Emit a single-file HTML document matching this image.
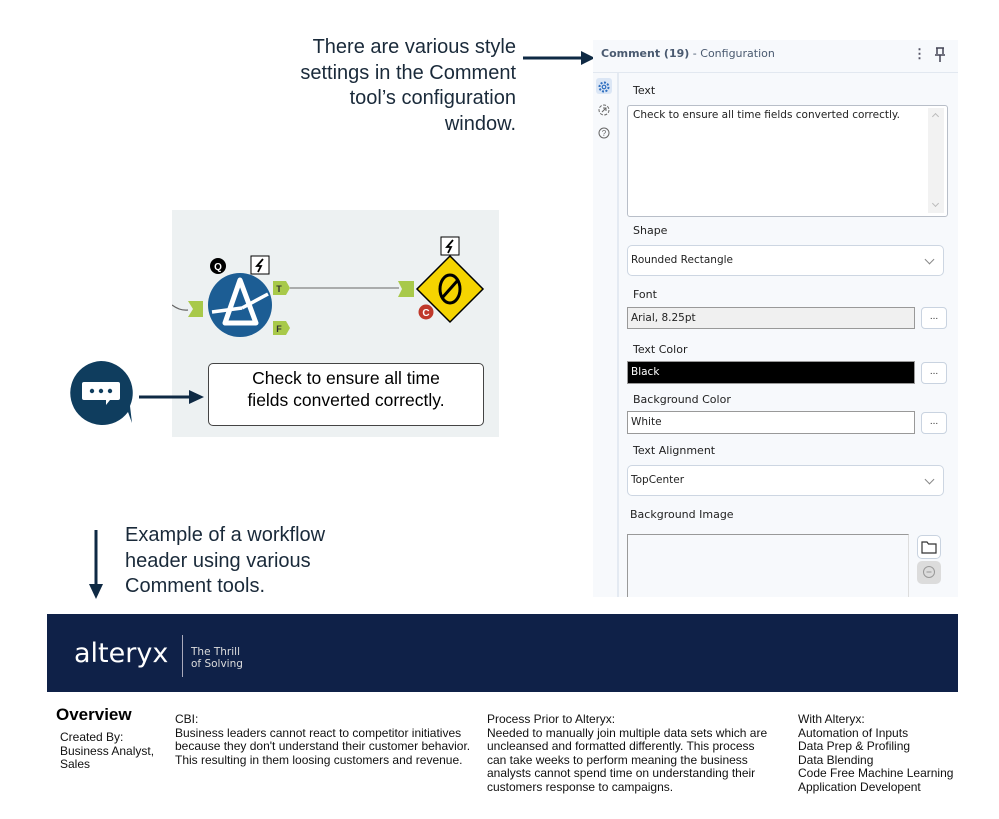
<!DOCTYPE html>
<html><head><meta charset="utf-8"><style>
*{margin:0;padding:0;box-sizing:border-box}
body{width:999px;height:819px;background:#fff;position:relative;overflow:hidden;font-family:"Liberation Sans",sans-serif}
.a{position:absolute}
.cal{font-family:"DejaVu Sans","Liberation Sans",sans-serif}
.big{font-family:"Liberation Sans",sans-serif;font-size:20px;color:#1a2a3a;line-height:25.5px}
.lbl{position:absolute;left:633px;font-size:11px;color:#222;font-family:"DejaVu Sans",sans-serif}
.fld{position:absolute;font-size:10.5px;color:#222;font-family:"DejaVu Sans",sans-serif;padding-left:3px}
.btn{position:absolute;left:921px;width:26px;height:22px;border:1px solid #c9d3e0;border-radius:4px;background:#fff;font-size:10px;text-align:center;line-height:18px;color:#333}
.dd{position:absolute;left:627px;width:317px;height:31px;border:1px solid #cdd6e2;border-radius:5px;background:#fff;font-size:10.5px;padding:8px 3px;color:#222;font-family:"DejaVu Sans",sans-serif}
.dd:after{content:"";position:absolute;right:10px;top:10px;width:6px;height:6px;border-right:1px solid #888;border-bottom:1px solid #888;transform:rotate(45deg)}
.ft{font-size:12px;line-height:13.5px;color:#111}
</style></head><body>

<div class="a big" style="left:296px;top:35px;width:220px;text-align:right">There are various style settings in the Comment tool’s configuration window.</div>
<svg class="a" style="left:523px;top:48px" width="72" height="20"><line x1="0" y1="10" x2="60" y2="10" stroke="#0f2a44" stroke-width="3"/><polygon points="58,3 72,10 58,17" fill="#0f2a44"/></svg>

<!-- config panel -->
<div class="a" style="left:593px;top:40px;width:365px;height:557px;background:#f7f9fc"></div>
<div class="a" style="left:593px;top:72px;width:365px;height:1px;background:#e2e8f0"></div>
<div class="a" style="left:617px;top:73px;width:2px;height:524px;background:#e4eaf2"></div>
<div class="a cal" style="left:601px;top:47px;font-size:11px;color:#4a5a70"><b style="font-weight:bold;color:#4a5a70">Comment (19)</b> - Configuration</div>
<div class="a" style="left:913px;top:46px;font-size:13px;color:#556;font-weight:bold">⋮</div>
<svg class="a" style="left:934px;top:47px" width="12" height="16"><path d="M2 1h8M3 1v6M9 1v6M1 8h10M6 8v7" stroke="#445" stroke-width="1.5" fill="none"/></svg>
<div class="a" style="left:596px;top:78px;width:16px;height:16px;border-radius:3px;background:#dbe6f5"></div>
<svg class="a" style="left:597px;top:80px" width="14" height="14"><circle cx="7" cy="7" r="4.5" fill="none" stroke="#2f6fc0" stroke-width="2" stroke-dasharray="2 1.5"/><circle cx="7" cy="7" r="1.8" fill="none" stroke="#2f6fc0" stroke-width="1.2"/></svg>
<svg class="a" style="left:597px;top:103px" width="14" height="14"><circle cx="7" cy="7" r="5" fill="none" stroke="#666" stroke-width="1" stroke-dasharray="3 1.5"/><path d="M5 9l4-4M6 5h3v3" stroke="#666" fill="none"/></svg>
<svg class="a" style="left:597px;top:126px" width="14" height="14"><circle cx="7" cy="7" r="5" fill="none" stroke="#666" stroke-width="1"/><text x="7" y="10" font-size="8" text-anchor="middle" fill="#666" font-family="Liberation Sans">?</text></svg>

<div class="lbl" style="top:84px">Text</div>
<div class="a" style="left:627px;top:105px;width:321px;height:112px;border:1px solid #b8bec8;border-radius:3px;background:#fff"></div>
<div class="a" style="left:928px;top:108px;width:16px;height:105px;background:#f2f2f2"></div>
<div class="a" style="left:933px;top:114px;width:5px;height:5px;border-left:1px solid #bbb;border-top:1px solid #bbb;transform:rotate(45deg)"></div>
<div class="a" style="left:933px;top:201px;width:5px;height:5px;border-right:1px solid #bbb;border-bottom:1px solid #bbb;transform:rotate(45deg)"></div>
<div class="fld" style="left:630px;top:109px">Check to ensure all time fields converted correctly.</div>
<div class="lbl" style="top:224px">Shape</div>
<div class="dd" style="top:245px">Rounded Rectangle</div>
<div class="lbl" style="top:288px">Font</div>
<div class="fld" style="left:627px;top:307px;width:288px;height:22px;border:1px solid #999;background:#f0f0f0;line-height:20px">Arial, 8.25pt</div>
<div class="btn" style="top:307px">...</div>
<div class="lbl" style="top:343px">Text Color</div>
<div class="fld" style="left:627px;top:361px;width:288px;height:23px;border:1px solid #999;background:#000;color:#fff;line-height:21px">Black</div>
<div class="btn" style="top:362px">...</div>
<div class="lbl" style="top:393px">Background Color</div>
<div class="fld" style="left:627px;top:411px;width:288px;height:23px;border:1px solid #999;background:#fff;line-height:21px">White</div>
<div class="btn" style="top:412px">...</div>
<div class="lbl" style="top:444px">Text Alignment</div>
<div class="dd" style="top:465px">TopCenter</div>
<div class="lbl" style="left:630px;top:508px">Background Image</div>
<div class="a" style="left:627px;top:534px;width:282px;height:63px;border:1px solid #999;border-right-color:#ddd;border-bottom:none;background:#f7f9fc"></div>
<div class="a" style="left:917px;top:535px;width:24px;height:24px;border:1px solid #c9d3e0;border-radius:5px;background:#fff"></div>
<svg class="a" style="left:921px;top:540px" width="16" height="14"><path d="M1 2h5l1.5 2H15v9H1z" fill="none" stroke="#333" stroke-width="1.2"/></svg>
<div class="a" style="left:917px;top:561px;width:24px;height:23px;border-radius:5px;background:#dcdcdc"></div>
<svg class="a" style="left:922px;top:565px" width="14" height="14"><circle cx="7" cy="7" r="5.5" fill="none" stroke="#999"/><line x1="4.5" y1="7" x2="9.5" y2="7" stroke="#999"/></svg>

<!-- canvas -->
<div class="a" style="left:172px;top:210px;width:327px;height:227px;background:#edf1f2"></div>
<svg class="a" style="left:172px;top:210px" width="327" height="227">
<path d="M0 95 Q8 101 16 100" stroke="#666" fill="none" stroke-width="1.2"/>
<polygon points="16,91 31,91 31,107 16,107 21,99" fill="#a8c94a"/>
<circle cx="68" cy="95" r="32" fill="#1c5d94"/>
<path d="M68 70 L53 113 H84 Z" fill="none" stroke="#fff" stroke-width="5" stroke-linejoin="round"/>
<path d="M40 102 L70 98 M70 98 L96 84" stroke="#fff" stroke-width="3.5"/>
<circle cx="46" cy="56" r="8" fill="#000"/><text x="46" y="60" font-size="10" font-weight="bold" fill="#fff" text-anchor="middle" font-family="Liberation Sans">Q</text>
<rect x="79" y="46" width="18" height="18" fill="#fff" stroke="#000"/><path d="M91 49l-6 7h4l-3 6" stroke="#000" stroke-width="1.8" fill="none"/>
<polygon points="101,71 114,71 118,78 114,85 101,85" fill="#a8c94a"/><text x="107" y="82" font-size="9" font-weight="bold" fill="#333" text-anchor="middle">T</text>
<polygon points="101,111 114,111 118,118 114,125 101,125" fill="#a8c94a"/><text x="107" y="122" font-size="9" font-weight="bold" fill="#333" text-anchor="middle">F</text>
<line x1="118" y1="78" x2="227" y2="78" stroke="#666" stroke-width="1"/>
<polygon points="226,71 242,71 242,87 226,87 230,79" fill="#a8c94a"/>
<polygon points="278,46 311,79 278,112 245,79" fill="#f5d400" stroke="#000" stroke-width="1.5"/>
<ellipse cx="278" cy="79" rx="10" ry="14" fill="none" stroke="#000" stroke-width="3"/><line x1="270" y1="88" x2="286" y2="70" stroke="#000" stroke-width="3"/>
<rect x="269" y="27" width="18" height="18" fill="#fff" stroke="#000"/><path d="M281 30l-6 7h4l-3 6" stroke="#000" stroke-width="1.8" fill="none"/>
<circle cx="254" cy="102" r="7.5" fill="#c0392b"/><text x="254" y="106" font-size="10" font-weight="bold" fill="#fff" text-anchor="middle" font-family="Liberation Sans">C</text>
</svg>
<div class="a" style="left:208px;top:363px;width:276px;height:63px;border:1.5px solid #444;border-radius:5px;background:#fff;text-align:center;font-size:17.5px;line-height:22px;padding-top:3px;color:#000">Check to ensure all time<br>fields converted correctly.</div>
<svg class="a" style="left:66px;top:360px" width="140" height="70">
<path d="M35 1 A32 32 0 1 0 62 52 L66 63 L64 46 A32 32 0 0 0 35 1Z" fill="#0f3d5e"/>
<path d="M18 22h34a2 2 0 0 1 2 2v14a2 2 0 0 1-2 2H44l-4 5v-5H18a2 2 0 0 1-2-2V24a2 2 0 0 1 2-2z" fill="#fff"/>
<circle cx="26" cy="31" r="2.2" fill="#0f3d5e"/><circle cx="35" cy="31" r="2.2" fill="#0f3d5e"/><circle cx="44" cy="31" r="2.2" fill="#0f3d5e"/>
<line x1="73" y1="37" x2="125" y2="37" stroke="#0f2a44" stroke-width="3"/><polygon points="123,30 138,37 123,44" fill="#0f2a44"/>
</svg>

<svg class="a" style="left:86px;top:530px" width="20" height="70"><line x1="10" y1="0" x2="10" y2="56" stroke="#0f2a44" stroke-width="3"/><polygon points="3,54 10,69 17,54" fill="#0f2a44"/></svg>
<div class="a big" style="left:125px;top:523px;width:240px">Example of a workflow header using various Comment tools.</div>

<!-- header banner -->
<div class="a" style="left:47px;top:614px;width:911px;height:78px;background:#0f2148"></div>
<div class="a" style="left:74px;top:638px;font-size:27px;color:#fff;font-family:'DejaVu Sans',sans-serif;letter-spacing:0px">alteryx</div>
<div class="a" style="left:182px;top:635px;width:1px;height:42px;background:#aab"></div>
<div class="a" style="left:191px;top:647px;font-size:10.5px;line-height:11.5px;color:#ddd;font-family:'DejaVu Sans',sans-serif">The Thrill<br>of Solving</div>

<div class="a" style="left:56px;top:705px;font-size:17px;font-weight:bold">Overview</div>
<div class="a ft" style="left:60px;top:731px">Created By:<br>Business Analyst,<br>Sales</div>
<div class="a ft" style="left:175px;top:713px">CBI:<br>Business leaders cannot react to competitor initiatives<br>because they don't understand their customer behavior.<br>This resulting in them loosing customers and revenue.</div>
<div class="a ft" style="left:487px;top:713px">Process Prior to Alteryx:<br>Needed to manually join multiple data sets which are<br>uncleansed and formatted differently. This process<br>can take weeks to perform meaning the business<br>analysts cannot spend time on understanding their<br>customers response to campaigns.</div>
<div class="a ft" style="left:798px;top:713px">With Alteryx:<br>Automation of Inputs<br>Data Prep &amp; Profiling<br>Data Blending<br>Code Free Machine Learning<br>Application Developent</div>
</body></html>
